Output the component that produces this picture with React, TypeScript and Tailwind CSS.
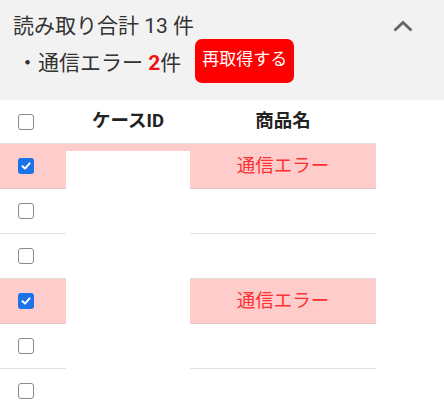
import React from "react";

const rows = [
  { checked: true, error: true },
  { checked: false, error: false },
  { checked: false, error: false },
  { checked: true, error: true },
  { checked: false, error: false },
  { checked: false, error: false },
];

function Box({ checked }: { checked: boolean }) {
  return checked ? (
    <div className="w-[16px] h-[16px] rounded-[3px] bg-[#1a73e8] flex items-center justify-center">
      <svg width="12" height="12" viewBox="0 0 12 12">
        <path d="M2.5 6.2 L5 8.6 L9.6 3.4" fill="none" stroke="white" strokeWidth="2" strokeLinecap="round" strokeLinejoin="round" />
      </svg>
    </div>
  ) : (
    <div className="w-[16px] h-[16px] rounded-[3px] border-[1.5px] border-[#8a8a8a] bg-white" />
  );
}

export default function App() {
  return (
    <div
      className="relative w-[444px] h-[410px] bg-white overflow-hidden text-[#333]"
      style={{ fontFamily: "Roboto, 'Noto Sans CJK JP', sans-serif" }}
    >
      <div className="h-[100px] bg-[#f2f2f2] flex justify-between pl-[13px] pr-[30px]">
        <div className="flex flex-col">
          <div className="mt-[13px] text-[21px] leading-[26px]">読み取り合計 13 件</div>
          <div className="mt-[0px] flex items-center pl-[4px]">
            <span className="text-[21px] leading-[26px] mt-[4px]">・通信エラー <span className="text-[#ee1111] font-bold">2</span>件</span>
            <div className="ml-[14px] w-[99px] h-[44px] rounded-[7px] bg-[#ff0000] text-white text-[17px] flex items-center justify-center pb-[2px]">
              再取得する
            </div>
          </div>
        </div>
        <div className="mt-[19px]">
          <svg width="22" height="14" viewBox="0 0 22 14">
            <path d="M2.5 11.5 L11 3.5 L19.5 11.5" fill="none" stroke="#666" strokeWidth="2.8" />
          </svg>
        </div>
      </div>
      <div className="w-[376px]">
        <div className="h-[44px] flex items-center border-b border-[#e0e0e0]">
          <div className="w-[66px] flex pl-[18px]"><Box checked={false} /></div>
          <div className="w-[124px] text-center font-bold text-[18.5px] text-[#222]">ケースID</div>
          <div className="w-[186px] text-center font-bold text-[18.5px] text-[#222]">商品名</div>
        </div>
        {rows.map((r, i) => (
          <div
            key={i}
            className={`h-[45px] flex items-center border-b ${r.error ? "bg-[#ffcccc] border-[#e6c8c8]" : "border-[#e0e0e0]"}`}
          >
            <div className="w-[66px] flex pl-[18px]"><Box checked={r.checked} /></div>
            <div className="w-[124px]" />
            <div className="w-[186px] text-center text-[18.5px] text-[#ff3030] pt-[2px]">{r.error ? "通信エラー" : ""}</div>
          </div>
        ))}
      </div>
      <div className="absolute left-[66px] top-[151px] w-[124px] h-[260px] bg-white" />
    </div>
  );
}
